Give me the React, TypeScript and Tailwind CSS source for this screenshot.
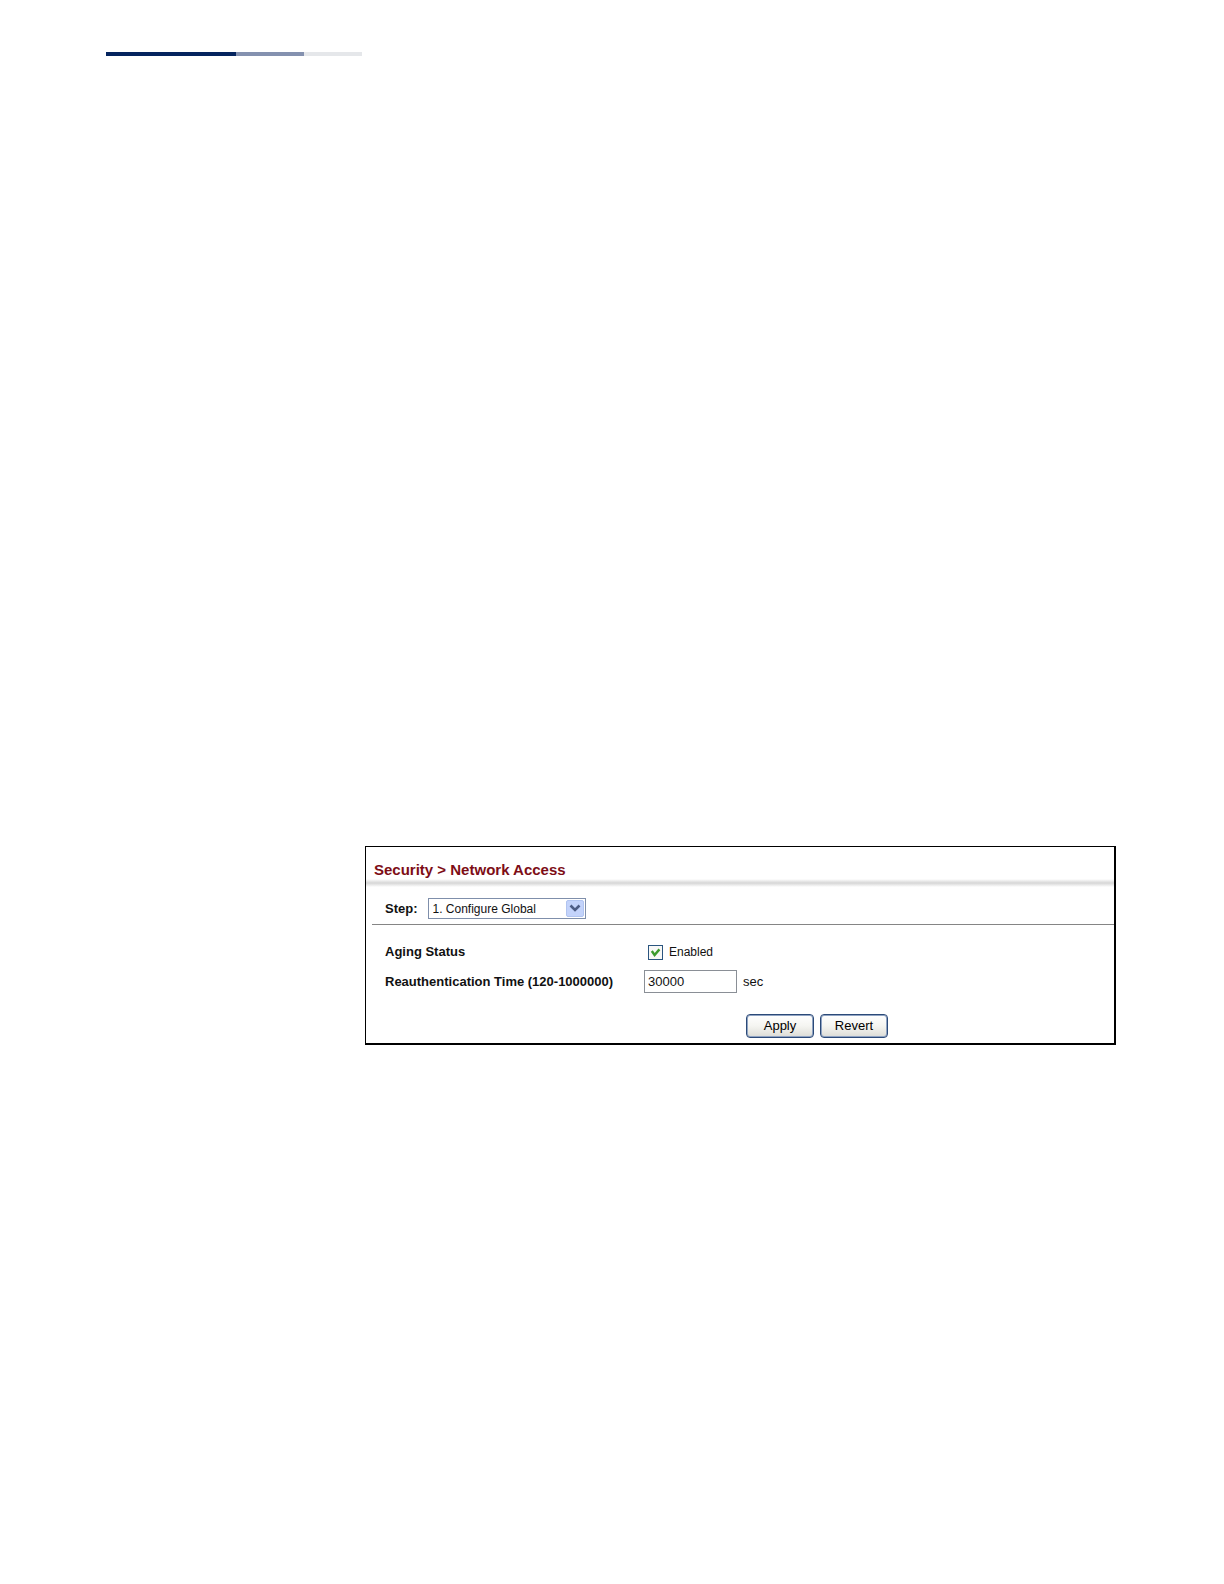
import { useState } from 'react'
import type { FormEvent } from 'react'

const steps = ['1. Configure Global', '2. Configure Interface']

const buttonClass =
  'h-6 w-17 rounded-[4px] border border-[#2c4a78] bg-linear-to-b from-white via-[#f5f5f1] to-[#dcdcd6] text-[13px] leading-4 text-black ring-1 ring-[#8fa3c2] ring-inset'

function PageRule() {
  return (
    <div className="flex h-1 w-64" aria-hidden="true">
      <div className="w-[130px] bg-[#04245e]" />
      <div className="w-17 bg-[#8491af]" />
      <div className="flex-1 bg-[#e5e7ea]" />
    </div>
  )
}

function StepSelect() {
  const [step, setStep] = useState(steps[0])

  return (
    <div className="flex items-center gap-2.5 pl-[13px]">
      <label htmlFor="step" className="font-bold">
        Step:
      </label>
      <div className="relative">
        <select
          id="step"
          value={step}
          onChange={(e) => setStep(e.target.value)}
          className="block h-[21px] w-[158px] appearance-none border border-[#7f8fab] bg-white pl-1 text-xs"
        >
          {steps.map((item) => (
            <option key={item}>{item}</option>
          ))}
        </select>
        <svg
          className="pointer-events-none absolute top-0.5 right-0.5 h-[17px] w-[18px]"
          viewBox="0 0 18 17"
          fill="none"
          aria-hidden="true"
        >
          <rect x="0.5" y="0.5" width="17" height="16" rx="1.5" fill="#c3d3fb" stroke="#b1c4f0" />
          <path d="M4.5 5.5L9 10L13.5 5.5" stroke="#4d5d85" strokeWidth="2.6" />
        </svg>
      </div>
    </div>
  )
}

export default function App() {
  const [aging, setAging] = useState(true)
  const [time, setTime] = useState('30000')

  const handleSubmit = (e: FormEvent) => e.preventDefault()

  const handleRevert = () => {
    setAging(true)
    setTime('30000')
  }

  return (
    <main className="min-h-screen bg-white pt-13 pr-27 pl-[106px] font-['Liberation_Sans',Arial,sans-serif] text-[13px] leading-4 text-[#111]">
      <PageRule />

      <form
        onSubmit={handleSubmit}
        onReset={handleRevert}
        className="mt-[790px] ml-[259px] border-t border-r-2 border-b-2 border-l border-black pb-[5px]"
      >
        <h1 className="pt-3.5 pl-2 text-[15px] leading-[18px] font-bold text-[#7d0d16]">
          Security &gt; Network Access
        </h1>
        <div className="h-2 bg-linear-to-b from-white via-[#d6d6d6] to-white" />

        <div className="ml-1.5 border-b border-[#858585] pt-[11px] pb-[5px]">
          <StepSelect />
        </div>

        <div className="grid grid-cols-[259px_1fr] items-center gap-y-1.5 pt-[15px] pl-[19px]">
          <label htmlFor="aging" className="font-bold">
            Aging Status
          </label>
          <div className="flex h-6 items-center gap-1.5 pl-1">
            <span className="relative block size-[15px]">
              <input
                id="aging"
                type="checkbox"
                checked={aging}
                onChange={(e) => setAging(e.target.checked)}
                className="block size-[15px] appearance-none border border-[#2b557f] bg-[#f8f8f6]"
              />
              {aging && (
                <svg
                  className="pointer-events-none absolute inset-0 size-[15px]"
                  viewBox="0 0 15 15"
                  fill="none"
                  aria-hidden="true"
                >
                  <path d="M3.8 6L6.6 10L11.4 4.4" stroke="#3c9a2c" strokeWidth="2.4" />
                </svg>
              )}
            </span>
            <label htmlFor="aging" className="text-xs">
              Enabled
            </label>
          </div>

          <label htmlFor="reauth" className="font-bold">
            Reauthentication Time (120-1000000)
          </label>
          <div className="flex items-center gap-1.5">
            <input
              id="reauth"
              type="text"
              value={time}
              onChange={(e) => setTime(e.target.value)}
              className="h-[23px] w-[93px] border border-[#8a8f96] bg-white px-[3px] text-[13px] leading-4"
            />
            <span>sec</span>
          </div>
        </div>

        <div className="flex gap-1.5 pt-[21px] pl-[380px]">
          <button type="submit" className={buttonClass}>
            Apply
          </button>
          <button type="reset" className={buttonClass}>
            Revert
          </button>
        </div>
      </form>
    </main>
  )
}
